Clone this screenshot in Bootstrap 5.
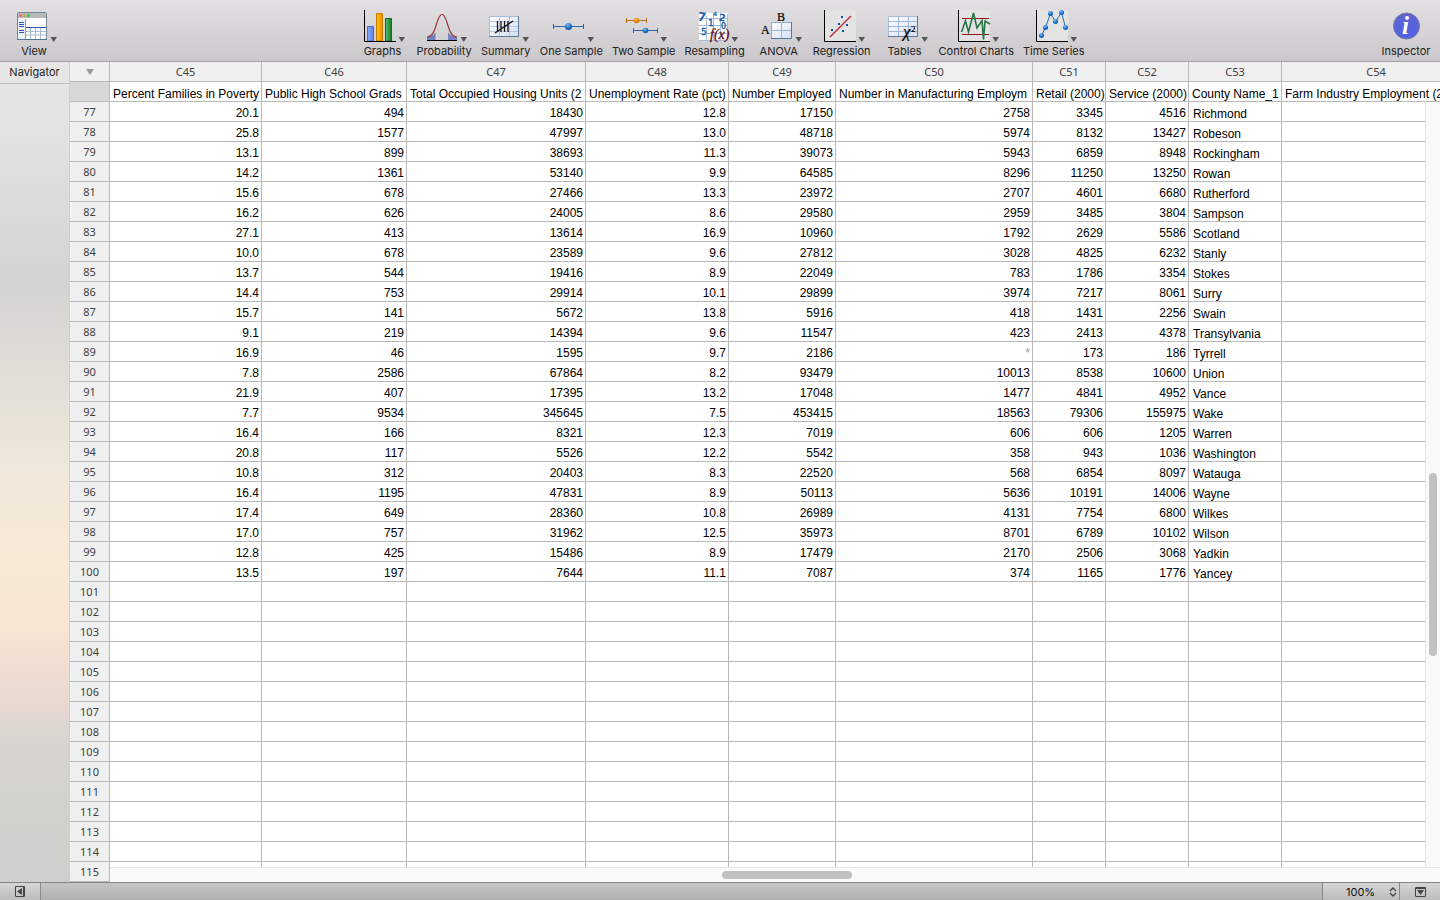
<!DOCTYPE html>
<html lang="en">
<head>
<meta charset="utf-8">
<meta name="viewport" content="width=device-width, initial-scale=1">
<title>Worksheet</title>
<link href="https://cdn.jsdelivr.net/npm/bootstrap@5.3.0/dist/css/bootstrap.min.css" rel="stylesheet">
<style>
  body { font-family: Inter, "Liberation Sans", sans-serif; font-size: 11px; color: #222; }
  button { font: inherit; color: inherit; }
  .toolbar { background: linear-gradient(#e2e0e2, #cac8ca); border-bottom: 1px solid #a39fa3; padding: 8px 9px 2px; height: 62px; }
  .tool { min-width: 50px; line-height: 16px; white-space: nowrap; }
  .tool svg { display: block; width: 48px; height: 35px; margin: 0 auto; }
  .tool-group { gap: 9px; padding-left: 2px; }
  .navpane { width: 70px; border-right: 1px solid #cfcfcf; background: linear-gradient(#e6e6e5 0, #e3e3e2 8%, #d3d3d1 27%, #e3dfd8 39%, #f2e9da 52%, #f7e9d6 62%, #f8e4d3 69%, #ebdad2 77%, #d8d4cf 83%, #d1d2cc 91%, #cfcfcd 100%); }
  .navhead { height: 22px; line-height: 21px; background: #e6e6e6; border-bottom: 1px solid #c2c2c2; }
  .sheet { min-width: 0; }
  .grid-table { table-layout: fixed; width: 1401px; border-collapse: separate; border-spacing: 0; font: 12px/19px "Liberation Sans", Arial, sans-serif; color: #000; }
  .grid-table th, .grid-table td { height: 20px; padding: 0 2px 0 3px; border: solid #b9b9b9; border-width: 0 1px 1px 0; overflow: hidden; white-space: nowrap; font-weight: 400; line-height: 19px; text-align: right; background: #fff; }
  .grid-table td { padding-top: 3px; line-height: 16px; }
  .grid-table td.county { text-align: left; padding: 5px 0 0 4px; line-height: 14px; }
  .grid-table .field th { text-align: left; padding: 5px 0 0 3px; line-height: 14px; }
  .grid-table .colid th, .grid-table tbody th { font: 11px/19px "Noto Sans", sans-serif; color: #404040; background: #f0f0f0; text-align: center; padding: 0; }
  .grid-table .field .corner { background: #d8d8d8; }
  .grid-table .absent { color: #999; }
  .vtrack { right: 0; top: 40px; bottom: 0; width: 15px; background: #fafafa; border-left: 1px solid #e6e6e6; }
  .htrack { left: 40px; right: 0; bottom: 0; height: 15px; background: #fafafa; border-top: 1px solid #e6e6e6; }
  .thumb { background: #c1c1c1; border-radius: 4px; }
  .vtrack .thumb { left: 3px; width: 8px; bottom: 29%; height: 183px; }
  .htrack .thumb { top: 3px; height: 8px; left: 46%; width: 130px; }
  .status { height: 18px; border-top: 1px solid #858585; background: linear-gradient(#c6c6c6, #b0b0b0); }
  .status-cell { background: linear-gradient(#d6d6d6, #bcbcbc); }
  .pane-toggle { width: 41px; border-right: 1px solid #8a8a8a; }
  .zoom-cell { width: 78px; border: solid #8a8a8a; border-width: 0 1px; }
  .zoom-cell select { appearance: none; border: 0; background: transparent; font: 11px/16px Inter, sans-serif; color: #111; width: 66px; padding: 0 0 0 23px; }
  .menu-toggle { width: 40px; }
</style>
</head>
<body class="vh-100 d-flex flex-column overflow-hidden">

<svg width="0" height="0" class="position-absolute" aria-hidden="true">
  <defs>
    <linearGradient id="cell" x1="0" y1="0" x2="1" y2="1"><stop offset="0" stop-color="#fff"/><stop offset="1" stop-color="#d5def2"/></linearGradient>
    <linearGradient id="blue"><stop offset="0" stop-color="#8aa8ff"/><stop offset="1" stop-color="#6083dd"/></linearGradient>
    <linearGradient id="gold"><stop offset="0" stop-color="#ffc400"/><stop offset="1" stop-color="#f08a00"/></linearGradient>
    <linearGradient id="green"><stop offset="0" stop-color="#58c060"/><stop offset="1" stop-color="#16792d"/></linearGradient>
    <radialGradient id="ball" cx=".4" cy=".3"><stop offset="0" stop-color="#7fc1ff"/><stop offset="1" stop-color="#1561b5"/></radialGradient>
    <radialGradient id="oball" cx=".4" cy=".3"><stop offset="0" stop-color="#ffc04a"/><stop offset="1" stop-color="#d57e00"/></radialGradient>
    <linearGradient id="info" x1="0" y1="0" x2="0" y2="1"><stop offset="0" stop-color="#5f63cf"/><stop offset="1" stop-color="#5161e6"/></linearGradient>
    <path id="drop" d="M40.500 29h6.500l-3.250 5z" fill="#555"/>
    <g id="axes"><path d="M7 2h31v31H7z" fill="#e4e3e4"/><path d="M6.500 2v31.500H38" fill="none" stroke="#000"/></g>
  </defs>
</svg>

<header class="toolbar d-flex">
  <button class="tool border-0 bg-transparent p-0" type="button"><svg viewBox="0 0 48 35"><rect x="7.500" y="4.500" width="29" height="27" rx="1.500" fill="#fff" stroke="#718796"/><path d="M8 5h28v5H8z" fill="#b9b9b9"/><circle cx="10.500" cy="7.500" r="1.500" fill="#f46582"/><circle cx="14.500" cy="7.500" r="1.500" fill="#dda323"/><circle cx="18.500" cy="7.500" r="1.500" fill="#17cf47"/><path d="M8 11h7v20H8z" fill="#eef1f4"/><path d="M9 14.500h5M9 16.500h5M9 18.500h5M9 22.500h5M9 24.500h5" stroke="#2858c0"/><path d="M15.500 11v20" stroke="#8ca0ac"/><path d="M16 19.500h20" stroke="#3158b0"/><path d="M16 23.500h20M16 27h20M20.500 20v11M25.500 20v11M30.500 20v11" stroke="#a9b9d0"/><path d="M7 31.500h30" stroke="#527590"/><use href="#drop"/></svg>View</button>

  <div class="tool-group d-flex mx-auto">
    <button class="tool border-0 bg-transparent p-0" type="button"><svg viewBox="0 0 48 35"><path d="M9.500 18.500h6V33h-6z" fill="url(#blue)" stroke="#4a6cc0"/><path d="M18.500 5.500h6V33h-6z" fill="url(#gold)" stroke="#c97b00"/><path d="M27.500 10.500h6V33h-6z" fill="url(#green)" stroke="#146a28"/><path d="M6.500 2v31.500H38" fill="none" stroke="#000"/><use href="#drop"/></svg>Graphs</button>
    <button class="tool border-0 bg-transparent p-0" type="button"><svg viewBox="0 0 48 35"><path d="M7 29Q12 29 15.500 24.500V32H7zM37 29Q32 29 28 24.500V32H37z" fill="#7381c4"/><path d="M7 29C17 29 16 6.500 22 6.500S27 29 37 29" fill="none" stroke="#993030" stroke-width="1.200"/><path d="M7 32.500h30" stroke="#000"/><use href="#drop"/></svg>Probability</button>
    <button class="tool border-0 bg-transparent p-0" type="button"><svg viewBox="0 0 48 35"><path d="M7.500 8.500h29v20h-29z" fill="url(#cell)" stroke="#a9bdd8"/><path d="M7 13.500h30M7 18.500h30M7 23.500h30M17.500 8v20M27.500 8v20" stroke="#b4c7e0"/><path d="M7 28.500h29.500V8" fill="none" stroke="#5d7a9c"/><path d="M15.500 13v11M19 13v11M22.500 13v11M26 13v11M13 25l18-12" stroke="#111" stroke-width="1.300"/><use href="#drop"/></svg>Summary</button>
    <button class="tool border-0 bg-transparent p-0" type="button"><svg viewBox="0 0 48 35"><path d="M6.500 16v5M36.500 16v5M6 18.500h31" stroke="#2668ad"/><circle cx="21.500" cy="18.500" r="3.500" fill="url(#ball)"/><use href="#drop"/></svg>One Sample</button>
    <button class="tool border-0 bg-transparent p-0" type="button"><svg viewBox="0 0 48 35"><path d="M6.500 10v5M26.500 10v5M6 12.500h21" stroke="#b87319"/><circle cx="16.500" cy="12.500" r="2.800" fill="url(#oball)"/><path d="M13.500 20v5M37.500 20v5M13 22.500h25" stroke="#2668ad"/><circle cx="25.500" cy="22.500" r="2.800" fill="url(#ball)"/><use href="#drop"/></svg>Two Sample</button>
    <button class="tool border-0 bg-transparent p-0" type="button"><svg viewBox="0 0 48 35"><path d="M8 5h29v28H8z" fill="#fff"/><path d="M8 10.500h29M8 17.500h29M8 25.500h29M8 32.500h29M15.500 8v25M22.500 5v28M29.500 5v28M36.500 6v27" stroke="#a8bbd5"/><g fill="#1e62a8" font-family="DejaVu Sans" font-weight="700"><text x="7" y="13" font-size="12" transform="rotate(8 10 8)">7</text><text x="22" y="8" font-size="6">4</text><text x="28" y="13" font-size="10" transform="rotate(10 31 9)">2</text><g font-weight="400" stroke="#1e62a8" stroke-width=".4"><text x="17" y="18" font-size="9">1</text><text x="30" y="21" font-size="8">0</text><text x="10" y="27" font-size="9">5</text></g></g><text x="19" y="31" font-family="Liberation Serif" font-style="italic" font-size="14" fill="#650d16" stroke="#650d16" stroke-width=".3">f(x)</text><use href="#drop"/></svg>Resampling</button>
    <button class="tool border-0 bg-transparent p-0" type="button"><svg viewBox="0 0 48 35"><path d="M16.500 14.500h20v16h-20z" fill="url(#cell)" stroke="#8daac8"/><path d="M26.500 14v17M16 22.500h21" stroke="#9ab4d0"/><path d="M16 30.500h20.500V14" fill="none" stroke="#56799d"/><g font-family="Liberation Serif" font-size="12" stroke="#000" stroke-width=".2"><text x="22" y="13">B</text><text x="6" y="26">A</text></g><use href="#drop"/></svg>ANOVA</button>
    <button class="tool border-0 bg-transparent p-0" type="button"><svg viewBox="0 0 48 35"><use href="#axes"/><path d="M12 29L33 8" stroke="#bc2230" stroke-width="1.200"/><path d="M23 8h2v2h-2zM20 15h2v2h-2zM28 16h2v2h-2zM13 21h2v2h-2zM24 22h2v2h-2z" fill="#0c559d"/><use href="#drop"/></svg>Regression</button>
    <button class="tool border-0 bg-transparent p-0" type="button"><svg viewBox="0 0 48 35"><path d="M7.500 8.500h29v20h-29z" fill="url(#cell)" stroke="#a9bdd8"/><path d="M7 13.500h30M7 18.500h30M7 23.500h30M17.500 8v20M27.500 8v20" stroke="#9fb6d5"/><path d="M7 28.500h29.500V8" fill="none" stroke="#5d7a9c"/><g font-family="Liberation Serif" font-style="italic" stroke="#000" stroke-width=".2"><text x="22" y="29" font-size="17">χ</text><text x="30" y="24" font-size="9" font-style="normal">2</text></g><use href="#drop"/></svg>Tables</button>
    <button class="tool border-0 bg-transparent p-0" type="button"><svg viewBox="0 0 48 35"><use href="#axes"/><path d="M10 10.500h27M10 26.500h27" stroke="#9a1119"/><path d="M9.500 24l4-11 3 11 5-19 3.500 15 5-7.500 1.500 19 1.500-18.500 5 3" fill="none" stroke="#287544" stroke-width="1.600"/><use href="#drop"/></svg>Control Charts</button>
    <button class="tool border-0 bg-transparent p-0" type="button"><svg viewBox="0 0 48 35"><use href="#axes"/><path d="M11.500 27.500l4-8 5-14 5 8 6-9 4 15" fill="none" stroke="#2767ad"/><g fill="url(#ball)"><circle cx="11.500" cy="27.500" r="2.500"/><circle cx="15.500" cy="19.500" r="2.500"/><circle cx="20.500" cy="5.500" r="2.500"/><circle cx="25.500" cy="13.500" r="2.500"/><circle cx="31.500" cy="4.500" r="2.500"/><circle cx="35.500" cy="19.500" r="2.500"/></g><use href="#drop"/></svg>Time Series</button>
  </div>

  <button class="tool border-0 bg-transparent p-0" type="button"><svg viewBox="0 0 48 35"><circle cx="24.500" cy="18" r="13" fill="url(#info)" stroke="#777aa2"/><text x="20" y="26" font-family="Liberation Serif" font-size="25" font-style="italic" font-weight="700" fill="#fff">i</text></svg>Inspector</button>
</header>

<main class="d-flex flex-grow-1 overflow-hidden">
  <aside class="navpane flex-shrink-0">
    <div class="navhead text-center">Navigator</div>
  </aside>
  <section class="sheet flex-grow-1 position-relative overflow-hidden">
    <table class="grid-table">
      <colgroup id="cols"></colgroup>
      <thead>
        <tr class="colid" id="ids"><th><svg class="d-block mx-auto" width="10" height="8"><path d="M1 1h8L5 7z" fill="#999"/></svg></th></tr>
        <tr class="field" id="fields"><th class="corner"></th></tr>
      </thead>
      <tbody id="rows"></tbody>
    </table>
    <div class="vtrack position-absolute"><div class="thumb position-absolute"></div></div>
    <div class="htrack position-absolute"><div class="thumb position-absolute"></div></div>
  </section>
</main>

<footer class="status d-flex flex-shrink-0">
  <button class="pane-toggle status-cell border-top-0 border-bottom-0 border-start-0 p-0 d-flex align-items-center justify-content-center" type="button" aria-label="Hide navigator"><svg width="10" height="11"><path d="M.500 .500h9v10h-9z" fill="none" stroke="#444"/><path d="M8.500 0v11" stroke="#444"/><path d="M7 2v7L2 5.500z" fill="#444"/></svg></button>
  <div class="zoom-cell status-cell ms-auto d-flex align-items-center">
    <select aria-label="Zoom"><option>100%</option><option>150%</option><option>200%</option></select>
    <svg width="8" height="10"><path d="M1 4l3-3 3 3M1 6l3 3 3-3" fill="none" stroke="#444" stroke-width="1.300"/></svg>
  </div>
  <button class="menu-toggle status-cell border-0 p-0 d-flex align-items-center justify-content-center" type="button" aria-label="Show panel"><svg width="11" height="10"><path d="M.500 .500h10v9H.500zM0 1.500h11" fill="none" stroke="#444"/><path d="M2 3h7L5.500 8z" fill="#444"/></svg></button>
</footer>

<script>
  const columns = [
    [152, 'Percent Families in Poverty'], [145, 'Public High School Grads'], [179, 'Total Occupied Housing Units (2'],
    [143, 'Unemployment Rate (pct)'], [107, 'Number Employed'], [197, 'Number in Manufacturing Employm'],
    [73, 'Retail (2000)'], [83, 'Service (2000)'], [93, 'County Name_1'], [189, 'Farm Industry Employment (2']
  ];
  const data = `20.1 494 18430 12.8 17150 2758 3345 4516 Richmond
25.8 1577 47997 13.0 48718 5974 8132 13427 Robeson
13.1 899 38693 11.3 39073 5943 6859 8948 Rockingham
14.2 1361 53140 9.9 64585 8296 11250 13250 Rowan
15.6 678 27466 13.3 23972 2707 4601 6680 Rutherford
16.2 626 24005 8.6 29580 2959 3485 3804 Sampson
27.1 413 13614 16.9 10960 1792 2629 5586 Scotland
10.0 678 23589 9.6 27812 3028 4825 6232 Stanly
13.7 544 19416 8.9 22049 783 1786 3354 Stokes
14.4 753 29914 10.1 29899 3974 7217 8061 Surry
15.7 141 5672 13.8 5916 418 1431 2256 Swain
9.1 219 14394 9.6 11547 423 2413 4378 Transylvania
16.9 46 1595 9.7 2186 * 173 186 Tyrrell
7.8 2586 67864 8.2 93479 10013 8538 10600 Union
21.9 407 17395 13.2 17048 1477 4841 4952 Vance
7.7 9534 345645 7.5 453415 18563 79306 155975 Wake
16.4 166 8321 12.3 7019 606 606 1205 Warren
20.8 117 5526 12.2 5542 358 943 1036 Washington
10.8 312 20403 8.3 22520 568 6854 8097 Watauga
16.4 1195 47831 8.9 50113 5636 10191 14006 Wayne
17.4 649 28360 10.8 26989 4131 7754 6800 Wilkes
17.0 757 31962 12.5 35973 8701 6789 10102 Wilson
12.8 425 15486 8.9 17479 2170 2506 3068 Yadkin
13.5 197 7644 11.1 7087 374 1165 1776 Yancey`.split('\n').map(line => line.split(' '));
  const put = (id, html) => document.getElementById(id).insertAdjacentHTML('beforeend', html);
  put('cols', '<col width="40">' + columns.map(c => `<col width="${c[0]}">`).join(''));
  put('ids', columns.map((c, i) => `<th scope="col">C${45 + i}</th>`).join(''));
  put('fields', columns.map(c => `<th scope="col">${c[1]}</th>`).join(''));
  let html = '';
  for (let n = 77; n <= 115; n++) {
    const row = data[n - 77] || [];
    html += `<tr><th scope="row">${n}</th>` + columns.map((c, i) => {
      const cls = i === 8 ? ' class="county"' : row[i] === '*' ? ' class="absent"' : '';
      return `<td${cls}>${row[i] || ''}</td>`;
    }).join('') + '</tr>';
  }
  put('rows', html);
</script>
<script src="https://cdn.jsdelivr.net/npm/bootstrap@5.3.0/dist/js/bootstrap.bundle.min.js"></script>
</body>
</html>
